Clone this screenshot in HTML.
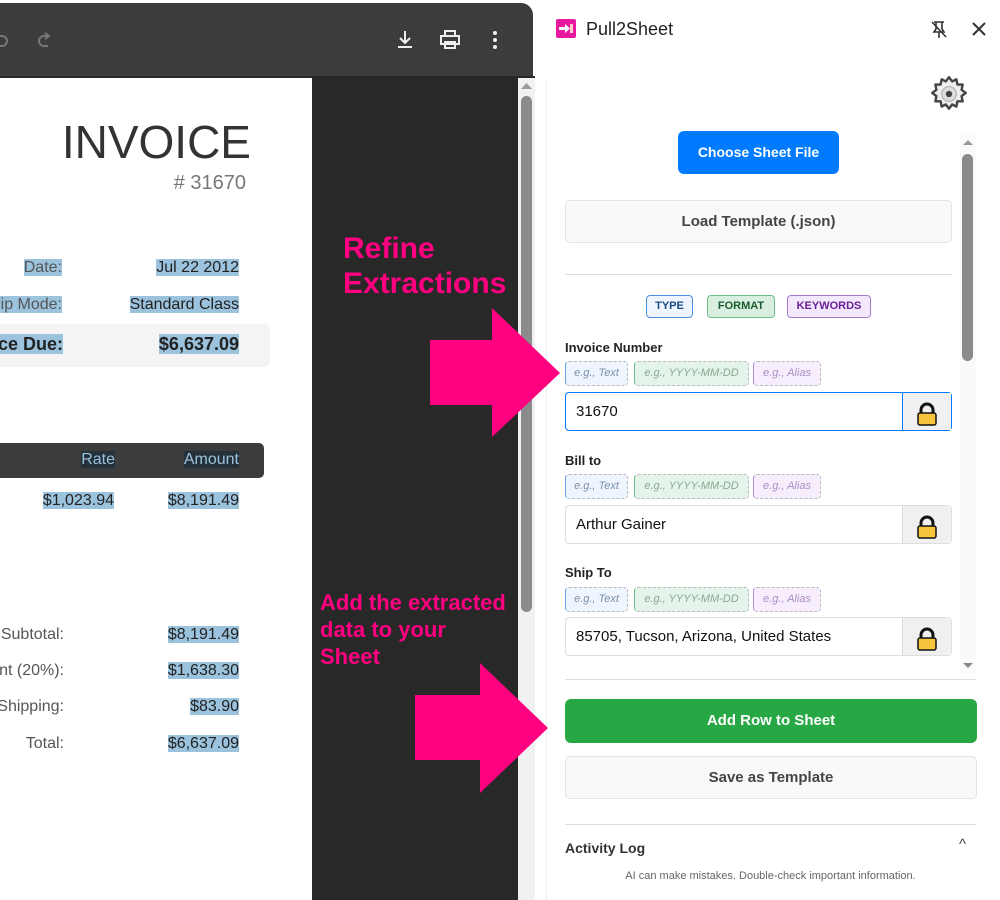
<!DOCTYPE html>
<html><head><meta charset="utf-8"><style>
*{box-sizing:border-box;margin:0;padding:0}
body{width:1000px;height:900px;overflow:hidden;background:#fff;font-family:"Liberation Sans",sans-serif;position:relative}
.a{position:absolute}
.hl{background:#9cc3dd}
.lbl{font-size:13px;font-weight:bold;color:#222}
.chip{position:absolute;height:25px;border:1px dashed #bbb;border-radius:4px;font-size:11px;font-style:italic;line-height:23px;text-align:center}
.c1{background:#eef5ff;color:#7a8fa8;width:63px;border-left:1px solid #6aa3e8}
.c2{background:#e5f4ea;color:#8aa890;width:115px;border-left:1px solid #6dc08a}
.c3{background:#f6eefc;color:#a98cc4;width:68px;border-left:1px solid #b58be0}
.inp{position:absolute;left:565px;width:387px;height:39px;border:1px solid #ddd;border-radius:4px;font-size:15px;line-height:37px;padding-left:10px;color:#111;background:#fff}
.lock{position:absolute;right:0;top:0;width:49px;height:37px;background:#f0f0f0;border-left:1px solid #ddd}
.r{position:absolute;white-space:nowrap;font-size:16px}
</style></head><body>
<!-- browser toolbar -->
<div class="a" style="left:0;top:3px;width:533px;height:73px;background:#3c3c3c;border-top-right-radius:12px"></div>
<div class="a" style="left:0;top:76px;width:535px;height:824px;background:#282828"></div>
<svg class="a" style="left:0;top:28px" width="60" height="26"><path d="M0 18 h2 a5 5 0 0 0 0-10 h-2" fill="none" stroke="#777" stroke-width="2"/><path d="M48 18 h-4 a5 5 0 0 1 0-10 h5 M45 5 l4 3 -4 3" fill="none" stroke="#777" stroke-width="2"/></svg>
<svg class="a" style="left:393px;top:28px" width="110" height="24"><path d="M12 3 v12 M7 10 l5 5 5-5 M5 19 h14" fill="none" stroke="#eee" stroke-width="2"/><path d="M52 7 v-4 h10 v4 M48 8 h18 v8 h-14 h-4z M52 14 h10 v6 h-10z" fill="none" stroke="#eee" stroke-width="2"/><circle cx="102" cy="5" r="2" fill="#eee"/><circle cx="102" cy="12" r="2" fill="#eee"/><circle cx="102" cy="19" r="2" fill="#eee"/></svg>
<!-- page -->
<div class="a" style="left:0;top:78px;width:312px;height:822px;background:#fff;overflow:hidden">
<div class="a" style="left:0;top:37px;width:251px;text-align:right;font-size:46px;color:#333">INVOICE</div>
<div class="a" style="left:0;top:94px;width:246px;text-align:right;font-size:20px;color:#777"># 31670</div>
<div class="a" style="left:0;top:246px;width:270px;height:43px;background:#f4f4f4;border-radius:0 6px 6px 0"></div>
<div class="r" style="right:250px;top:181px;color:#555"><span class="hl">Date:</span></div>
<div class="r" style="right:73px;top:181px;color:#222"><span class="hl">Jul 22 2012</span></div>
<div class="r" style="right:250px;top:218px;color:#555"><span class="hl">Ship Mode:</span></div>
<div class="r" style="right:73px;top:218px;color:#222"><span class="hl">Standard Class</span></div>
<div class="r" style="right:249px;top:256px;font-size:18px;font-weight:bold;color:#222"><span class="hl">Balance Due:</span></div>
<div class="r" style="right:73px;top:256px;font-size:18px;font-weight:bold;color:#222"><span class="hl">$6,637.09</span></div>
<div class="a" style="left:0;top:365px;width:264px;height:35px;background:#3c3c3c;border-radius:0 5px 5px 0"></div>
<div class="r" style="right:197px;top:373px;color:#9cc3dd"><span style="background:#24303a">Rate</span></div>
<div class="r" style="right:73px;top:373px;color:#9cc3dd"><span style="background:#24303a">Amount</span></div>
<div class="r" style="right:198px;top:414px;color:#222"><span class="hl">$1,023.94</span></div>
<div class="r" style="right:73px;top:414px;color:#222"><span class="hl">$8,191.49</span></div>
<div class="r" style="right:248px;top:548px;color:#555">Subtotal:</div>
<div class="r" style="right:248px;top:584px;color:#555">Discount (20%):</div>
<div class="r" style="right:248px;top:620px;color:#555">Shipping:</div>
<div class="r" style="right:248px;top:657px;color:#555">Total:</div>
<div class="r" style="right:73px;top:548px;color:#222"><span class="hl">$8,191.49</span></div>
<div class="r" style="right:73px;top:584px;color:#222"><span class="hl">$1,638.30</span></div>
<div class="r" style="right:73px;top:620px;color:#222"><span class="hl">$83.90</span></div>
<div class="r" style="right:73px;top:657px;color:#222"><span class="hl">$6,637.09</span></div>
</div>
<!-- annotations -->
<div class="a" style="left:343px;top:231px;font-size:30px;font-weight:bold;color:#ff0080;line-height:35px;white-space:nowrap">Refine<br>Extractions</div>
<div class="a" style="left:320px;top:589px;font-size:22px;font-weight:bold;color:#ff0080;line-height:27px;white-space:nowrap">Add the extracted<br>data to your<br>Sheet</div>
<!-- browser scrollbar -->
<div class="a" style="left:518px;top:78px;width:17px;height:822px;background:#f1f1f1"></div>
<div class="a" style="left:521px;top:96px;width:11px;height:516px;background:#8b8b8b;border-radius:6px"></div>
<svg class="a" style="left:519px;top:81px" width="15" height="10"><path d="M2 8 L7.5 2 13 8z" fill="#999"/></svg>
<!-- side panel -->
<div class="a" style="left:535px;top:0;width:465px;height:900px;background:#fff"></div>
<div class="a" style="left:546px;top:82px;width:1px;height:818px;background:#e8eef5"></div>
<svg class="a" style="left:556px;top:19px" width="20" height="19"><rect width="20" height="19" rx="2" fill="#e8199e"/><path d="M3 8 h6 v-3 l5 4.5 -5 4.5 v-3 h-6z" fill="#fff"/><rect x="14" y="5" width="3" height="9" fill="#fcc"/></svg>
<div class="a" style="left:586px;top:19px;font-size:18px;color:#222">Pull2Sheet</div>
<svg class="a" style="left:929px;top:19px" width="20" height="20"><path d="M5 3 h10 M7 3 v7 l-2 3 h10 l-2-3 v-7 M10 13 v6 M3 3 l14 15" fill="none" stroke="#333" stroke-width="1.6"/></svg>
<svg class="a" style="left:971px;top:21px" width="16" height="16"><path d="M2 2 L14 14 M14 2 L2 14" stroke="#333" stroke-width="2"/></svg>
<svg class="a" style="left:929px;top:74px" width="40" height="40"><g transform="translate(20 20) scale(1.05) translate(-18 -18)"><path d="M18 2 l3 4 4-2 1 5 5 0-1 5 4 3-4 3 1 5-5 0-1 5-4-2-3 4-3-4-4 2-1-5-5 0 1-5-4-3 4-3-1-5 5 0 1-5 4 2z" fill="#eee" stroke="#444" stroke-width="2.3" stroke-linejoin="round"/><circle cx="18" cy="18" r="7" fill="#ddd" stroke="#aaa"/><circle cx="18" cy="18" r="3" fill="#444"/></g></svg>
<!-- inner scroll -->
<div class="a" style="left:960px;top:133px;width:16px;height:540px;background:#fafafa"></div>
<div class="a" style="left:962px;top:154px;width:11px;height:207px;background:#8b8b8b;border-radius:6px"></div>
<svg class="a" style="left:960px;top:137px" width="16" height="10"><path d="M3 8 L8 3 13 8z" fill="#999"/></svg>
<svg class="a" style="left:960px;top:661px" width="16" height="10"><path d="M3 2 L8 7 13 2z" fill="#888"/></svg>
<div class="a" style="left:678px;top:131px;width:161px;height:43px;background:#007bff;border-radius:6px;color:#fff;font-size:14px;font-weight:bold;text-align:center;line-height:43px">Choose Sheet File</div>
<div class="a" style="left:565px;top:200px;width:387px;height:43px;background:#f8f9fa;border:1px solid #e4e4e4;border-radius:5px;color:#444;font-size:15px;font-weight:bold;text-align:center;line-height:41px">Load Template (.json)</div>
<div class="a" style="left:565px;top:274px;width:387px;height:1px;background:#ddd"></div>
<div class="a" style="left:646px;top:295px;width:47px;height:23px;background:#eef5ff;border:1px solid #4a90e2;border-radius:4px;font-size:11px;font-weight:bold;color:#1a4a80;text-align:center;line-height:21px">TYPE</div>
<div class="a" style="left:707px;top:295px;width:68px;height:23px;background:#d8efdf;border:1px solid #6dbf85;border-radius:4px;font-size:11px;font-weight:bold;color:#1d5a30;text-align:center;line-height:21px">FORMAT</div>
<div class="a" style="left:787px;top:295px;width:84px;height:23px;background:#f3e8fc;border:1px solid #a57cc9;border-radius:4px;font-size:11px;font-weight:bold;color:#6a1f9a;text-align:center;line-height:21px">KEYWORDS</div>

<div class="a lbl" style="left:565px;top:340px">Invoice Number</div>
<div class="chip c1" style="left:565px;top:361px">e.g., Text</div>
<div class="chip c2" style="left:634px;top:361px">e.g., YYYY-MM-DD</div>
<div class="chip c3" style="left:753px;top:361px">e.g., Alias</div>
<div class="inp" style="top:392px;border-color:#007bff">31670<div class="lock" style="border-left-color:#007bff"></div></div>

<div class="a lbl" style="left:565px;top:453px">Bill to</div>
<div class="chip c1" style="left:565px;top:474px">e.g., Text</div>
<div class="chip c2" style="left:634px;top:474px">e.g., YYYY-MM-DD</div>
<div class="chip c3" style="left:753px;top:474px">e.g., Alias</div>
<div class="inp" style="top:505px">Arthur Gainer<div class="lock"></div></div>

<div class="a lbl" style="left:565px;top:565px">Ship To</div>
<div class="chip c1" style="left:565px;top:587px">e.g., Text</div>
<div class="chip c2" style="left:634px;top:587px">e.g., YYYY-MM-DD</div>
<div class="chip c3" style="left:753px;top:587px">e.g., Alias</div>
<div class="inp" style="top:617px">85705, Tucson, Arizona, United States<div class="lock"></div></div>

<svg class="a" style="left:0;top:0" width="1000" height="900"><g id="lk"><path d="M921 414 v-4 a6 6 0 0 1 12 0 v4" fill="none" stroke="#111" stroke-width="3"/><rect x="918" y="413" width="18" height="12" rx="2" fill="#f9c43d" stroke="#111" stroke-width="1.5"/></g><use href="#lk" y="113"/><use href="#lk" y="225"/></svg>

<div class="a" style="left:565px;top:679px;width:411px;height:1px;background:#ddd"></div>
<div class="a" style="left:565px;top:699px;width:412px;height:44px;background:#28a745;border-radius:6px;color:#fff;font-size:15px;font-weight:bold;text-align:center;line-height:44px">Add Row to Sheet</div>
<div class="a" style="left:565px;top:756px;width:412px;height:43px;background:#f8f9fa;border:1px solid #e4e4e4;border-radius:5px;color:#444;font-size:15px;font-weight:bold;text-align:center;line-height:41px">Save as Template</div>
<div class="a" style="left:565px;top:824px;width:411px;height:1px;background:#ddd"></div>
<div class="a" style="left:565px;top:840px;font-size:14px;font-weight:bold;color:#333">Activity Log</div>
<div class="a" style="left:959px;top:836px;font-size:15px;color:#444">^</div>
<div class="a" style="left:565px;top:870px;width:411px;text-align:center;font-size:11px;color:#666">AI can make mistakes. Double-check important information.</div>
<!-- arrows on top -->
<svg class="a" style="left:0;top:0" width="1000" height="900"><path d="M430 340 H492 V308 L560 373 L492 437 V405 H430z" fill="#ff0080"/><path d="M415 695 H480 V663 L548 728 L480 793 V760 H415z" fill="#ff0080"/></svg>
</body></html>
